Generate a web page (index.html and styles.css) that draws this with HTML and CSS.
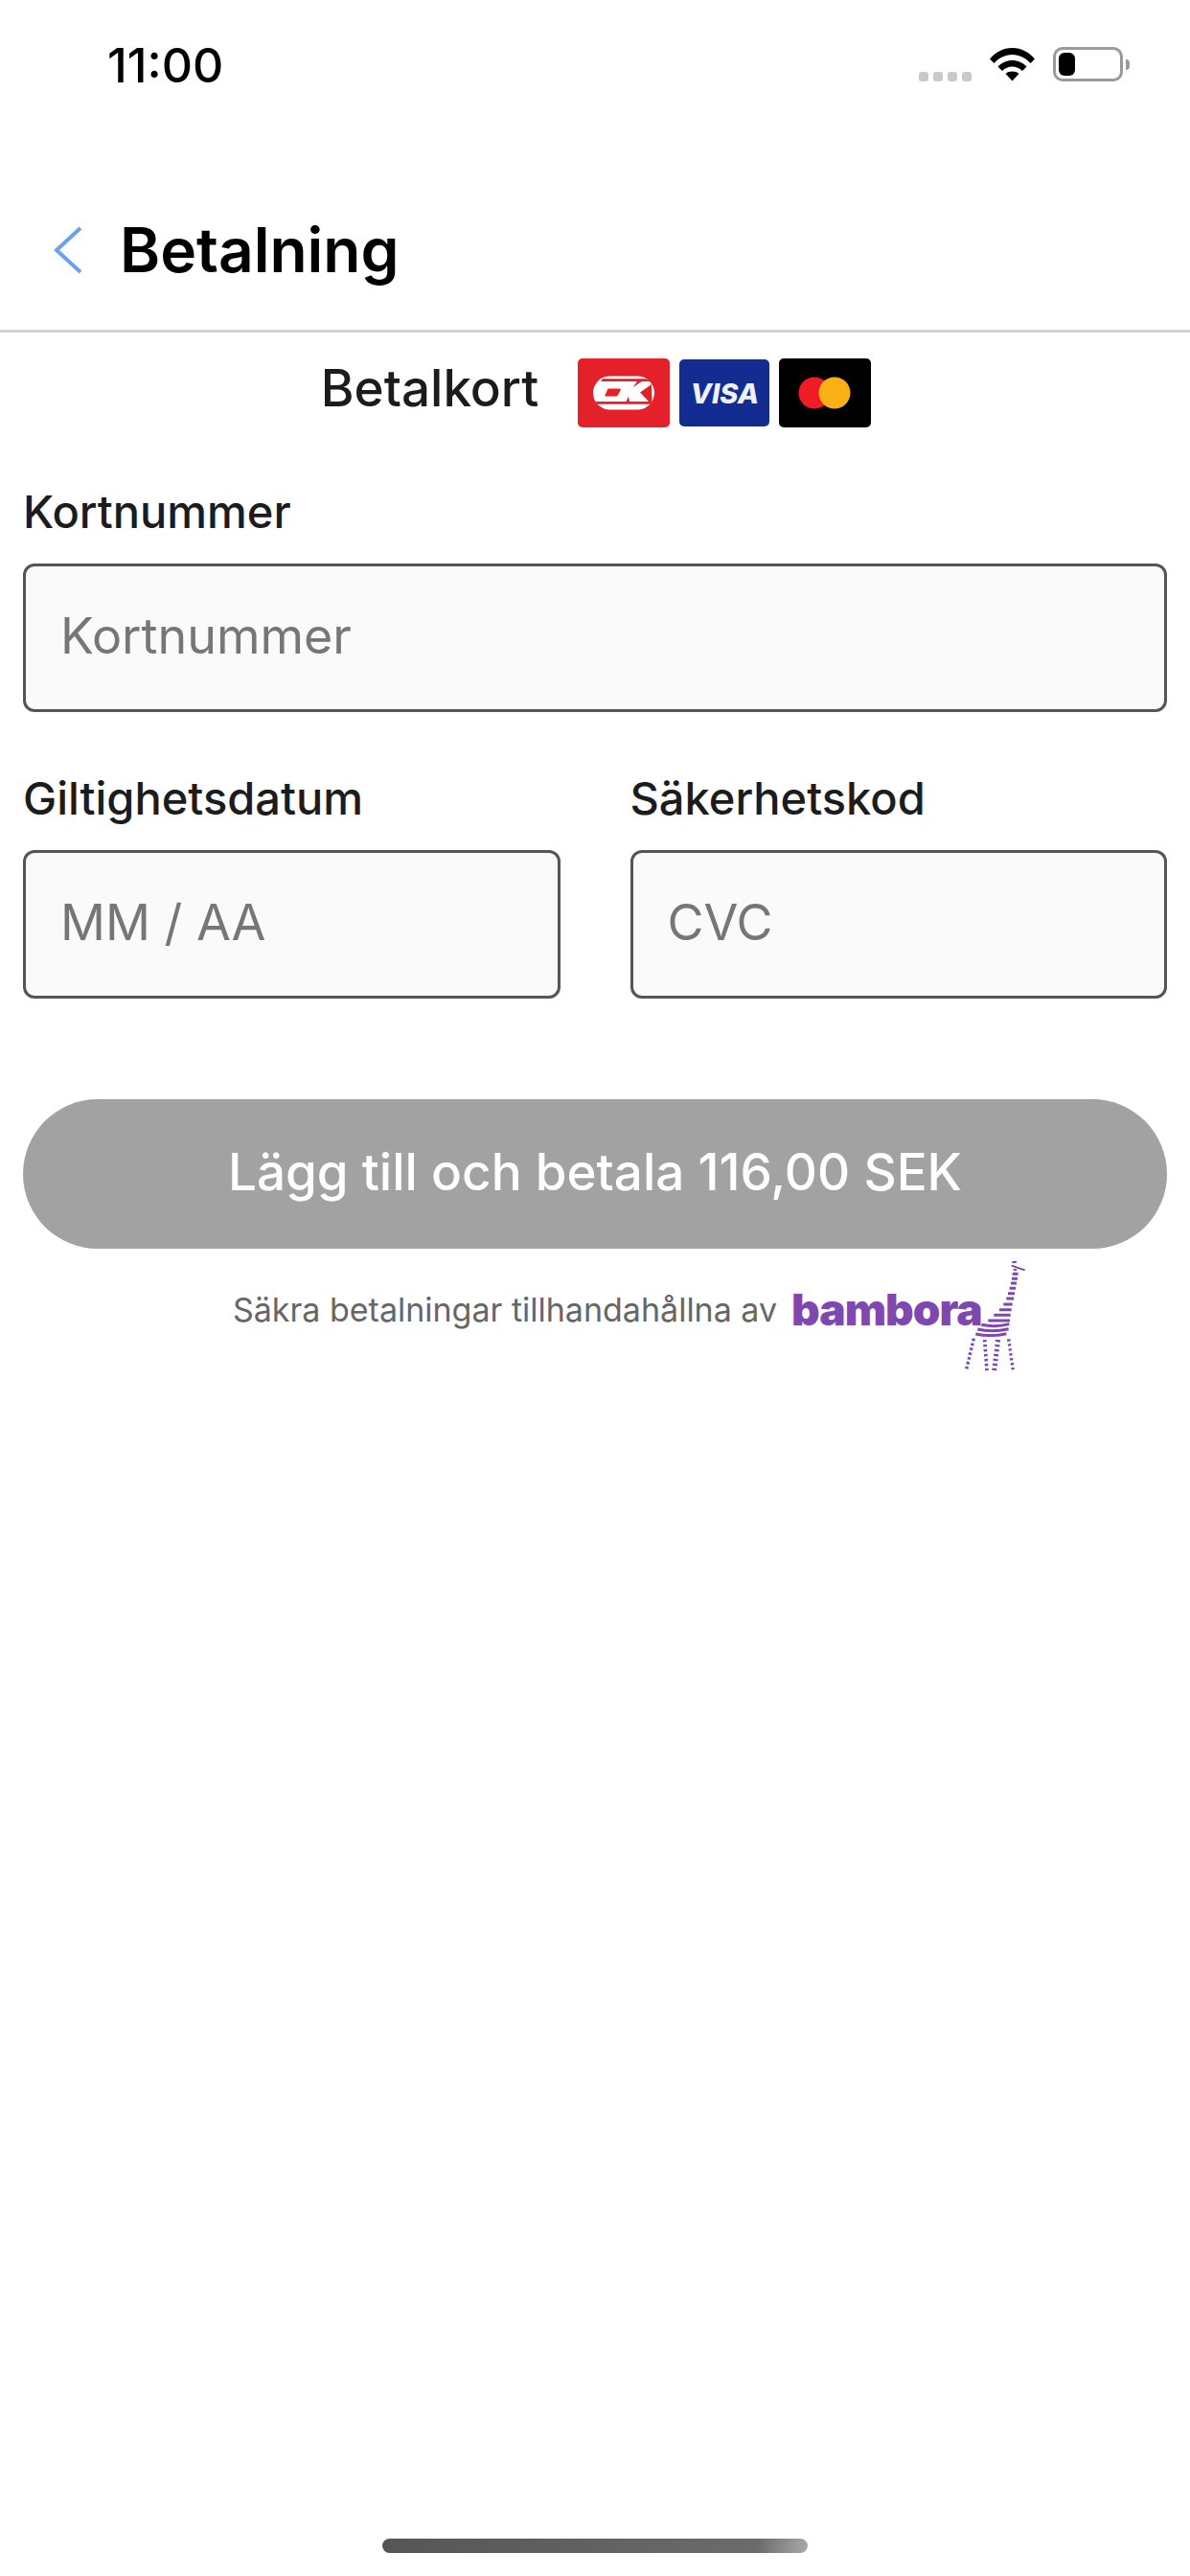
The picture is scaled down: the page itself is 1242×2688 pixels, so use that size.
FILE: index.html
```html
<!DOCTYPE html>
<html lang="sv">
<head>
<meta charset="utf-8">
<title>Betalning</title>
<link rel="stylesheet" href="styles.css">
</head>
<body>
<div class="page">
  <header class="status">
    <span class="time">11:00</span>
    <div class="status-icons">
      <div class="signal"><i></i><i></i><i></i><i></i></div>
      <svg class="wifi" width="47" height="36" viewBox="0 0 47 36"><path d="M0 12.500C6 5.500 14 1 23.500 1S41 5.500 47 12.500L42.500 17C37.500 11.500 31 8 23.500 8S9.500 11.500 4.500 17Z"/><path d="M8.500 20.500C12.500 16.500 17.500 14 23.500 14s11 2.500 15 6.500L34 25c-3-2.800-6.500-4.500-10.500-4.500S16 22.200 13 25Z"/><path d="M16.500 28C18.500 26.200 20.800 25.500 23.500 25.500S28.500 26.200 30.500 28L23.500 35.500Z"/></svg>
      <div class="battery"><div class="battery-fill"></div></div>
      <div class="battery-nub"></div>
    </div>
  </header>
  <nav class="nav">
    <svg class="back" width="32" height="50" viewBox="0 0 32 50"><path d="M29 2 4 25l25 23" fill="none" stroke="#6aa0ec" stroke-width="4"/></svg>
    <h1 class="title">Betalning</h1>
  </nav>
  <main class="content">
    <div class="cards">
      <span class="cards-label">Betalkort</span>
      <div class="card-icons">
        <svg class="card card-dk" width="96" height="72" viewBox="0 0 96 72">
          <rect width="96" height="72" rx="5" fill="#e4202b"/>
          <rect x="16" y="18.500" width="64" height="35" rx="17.500" fill="#fff"/>
          <path d="M26 21.300H70C73 21.300 75.500 22.500 76.500 24H24Z" fill="#e4202b"/>
          <path d="M18.500 45H77.500L76 47.800H20Z" fill="#e4202b"/>
          <path d="M31.500 31.500H44C45 31.500 45 32.500 44.500 33.500L42 38C41.500 39 40.500 39.500 39 39.500H28Z" fill="#e4202b"/>
          <path d="M77 27 65 35.500 74 45H77.500Z" fill="#e4202b"/>
          <path d="M67 24H62L57.500 30Z" fill="#e4202b"/>
          <path d="M53 39.500 50.500 45H54Z" fill="#e4202b"/>
        </svg>
        <div class="card card-visa"><span>VISA</span></div>
        <svg class="card card-mc" width="96" height="72" viewBox="0 0 96 72">
          <rect width="96" height="72" rx="5" fill="#000"/>
          <circle cx="37" cy="36" r="16.500" fill="#ee1c25"/>
          <circle cx="58" cy="36" r="16.500" fill="#fbb016"/>
        </svg>
      </div>
    </div>

    <div class="field">
      <label class="field-label">Kortnummer</label>
      <div class="input">Kortnummer</div>
    </div>

    <div class="field-row">
      <div class="field">
        <label class="field-label">Giltighetsdatum</label>
        <div class="input">MM / AA</div>
      </div>
      <div class="field">
        <label class="field-label">Säkerhetskod</label>
        <div class="input">CVC</div>
      </div>
    </div>

    <button class="pay">Lägg till och betala 116,00 SEK</button>

    <div class="provider">
      <span class="provider-text">Säkra betalningar tillhandahållna av</span>
      <div class="brand">
        <span class="brand-name">bambora</span>
        <svg class="giraffe" width="66" height="118" viewBox="620 40 198 354" fill="none" stroke="#7f47b0">
          <path d="M768 50 782 48M766 60 808 74M772 72 782 74" stroke-width="6"/>
          <path d="M769 86H787M767 101H785M764 115H782M760 131H779M755 147H776M750 163H773M741 181H769M728 198H766M711 215H763M693 232H761" stroke-width="9"/>
          <path d="M672 245Q715 254 759 243M660 259Q705 270 757 258M654 274Q700 284 750 273" stroke-width="9"/>
          <path d="M648 288 624 388" stroke-width="10" stroke-dasharray="8 7"/>
          <path d="M682 292 689 388" stroke-width="11" stroke-dasharray="7 8"/>
          <path d="M724 292 712 388" stroke-width="15" stroke-dasharray="7 8"/>
          <path d="M757 290 771 388" stroke-width="10" stroke-dasharray="7 8"/>
        </svg>
      </div>
    </div>
  </main>
  <div class="home-indicator"></div>
</div>
</body>
</html>
```

FILE: styles.css
```css
* { box-sizing: border-box; margin: 0; padding: 0; }
html, body { width: 1242px; height: 2688px; background: #fff; }
body { font-family: Inter, "Noto Sans", sans-serif; color: #1c1c1c; overflow: hidden; }

.page { width: 1242px; height: 2688px; display: flex; flex-direction: column; }

.status { height: 135px; padding: 40px 63px 0 112px; display: flex; justify-content: space-between; align-items: flex-start; flex: none; }
.time { font-size: 50px; line-height: 56px; font-weight: 500; color: #000; }
.status-icons { display: flex; align-items: flex-start; margin-top: 9px; }
.signal { display: flex; gap: 5px; margin-top: 26px; margin-right: 19px; }
.signal i { width: 10px; height: 10px; border-radius: 3px; background: #c9c9c9; }
.wifi { margin-right: 19px; }
.battery { width: 73px; height: 36px; border: 3px solid #999; border-radius: 10px; padding: 3px; }
.battery-fill { width: 17px; height: 24px; border-radius: 6px; background: #000; }
.battery-nub { width: 4px; height: 11px; margin: 13px 0 0 3px; background: #999; border-radius: 0 4px 4px 0; }

.nav { height: 212px; flex: none; display: flex; align-items: center; padding: 46px 0 4px 55px; border-bottom: 3px solid #d2d2d2; }
.back { margin-right: 38px; }
.title { font-size: 64px; line-height: 80px; font-weight: 600; color: #000; }

.content { padding: 0 24px; display: flex; flex-direction: column; }

.cards { display: flex; justify-content: center; align-items: center; gap: 41px; padding: 26px 0 0 2px; height: 100px; margin-bottom: 59px; }
.cards-label { font-size: 53px; line-height: 60px; font-weight: 500; margin-bottom: 10px; }
.card-icons { display: flex; gap: 10px; }
.card { display: block; width: 96px; height: 72px; flex: none; }
.card-visa { width: 94px; height: 70px; margin: 1px 0; background: #122c91; border-radius: 5px; display: flex; align-items: center; justify-content: center; }
.card-visa span { font-size: 29px; font-weight: 800; font-style: italic; color: #eef0f6; letter-spacing: 0; }

.field { display: flex; flex-direction: column; flex: 1 1 0; }
.field-label { font-size: 47px; line-height: 56px; font-weight: 500; margin-bottom: 26px; }
.input { height: 155px; border: 3px solid #555; border-radius: 12px; background: #fafafa; padding: 0 36px 5px; display: flex; align-items: center; font-size: 52px; color: #767676; }

.field-row { display: flex; gap: 73px; margin-top: 62px; }

.pay { margin-top: 105px; height: 156px; border: 0; border-radius: 78px; background: #a2a2a2; color: #fff; font-family: inherit; font-size: 53px; font-weight: 500; padding-bottom: 5px; }

.provider { display: flex; justify-content: center; align-items: center; gap: 15px; margin-top: 38px; padding-left: 22px; height: 50px; }
.provider-text { font-size: 34px; color: #666; }
.brand { position: relative; width: 195px; height: 50px; display: flex; align-items: center; }
.brand-name { font-size: 46px; line-height: 50px; font-weight: 900; color: #7f47b0; letter-spacing: -1px; }
.giraffe { position: absolute; left: 181px; top: -27px; }

.home-indicator { position: absolute; left: 399px; top: 2649px; width: 444px; height: 15px; border-radius: 8px; background: linear-gradient(100deg, #555 0%, #6b6b6b 88%, #aaa 100%); }
```
